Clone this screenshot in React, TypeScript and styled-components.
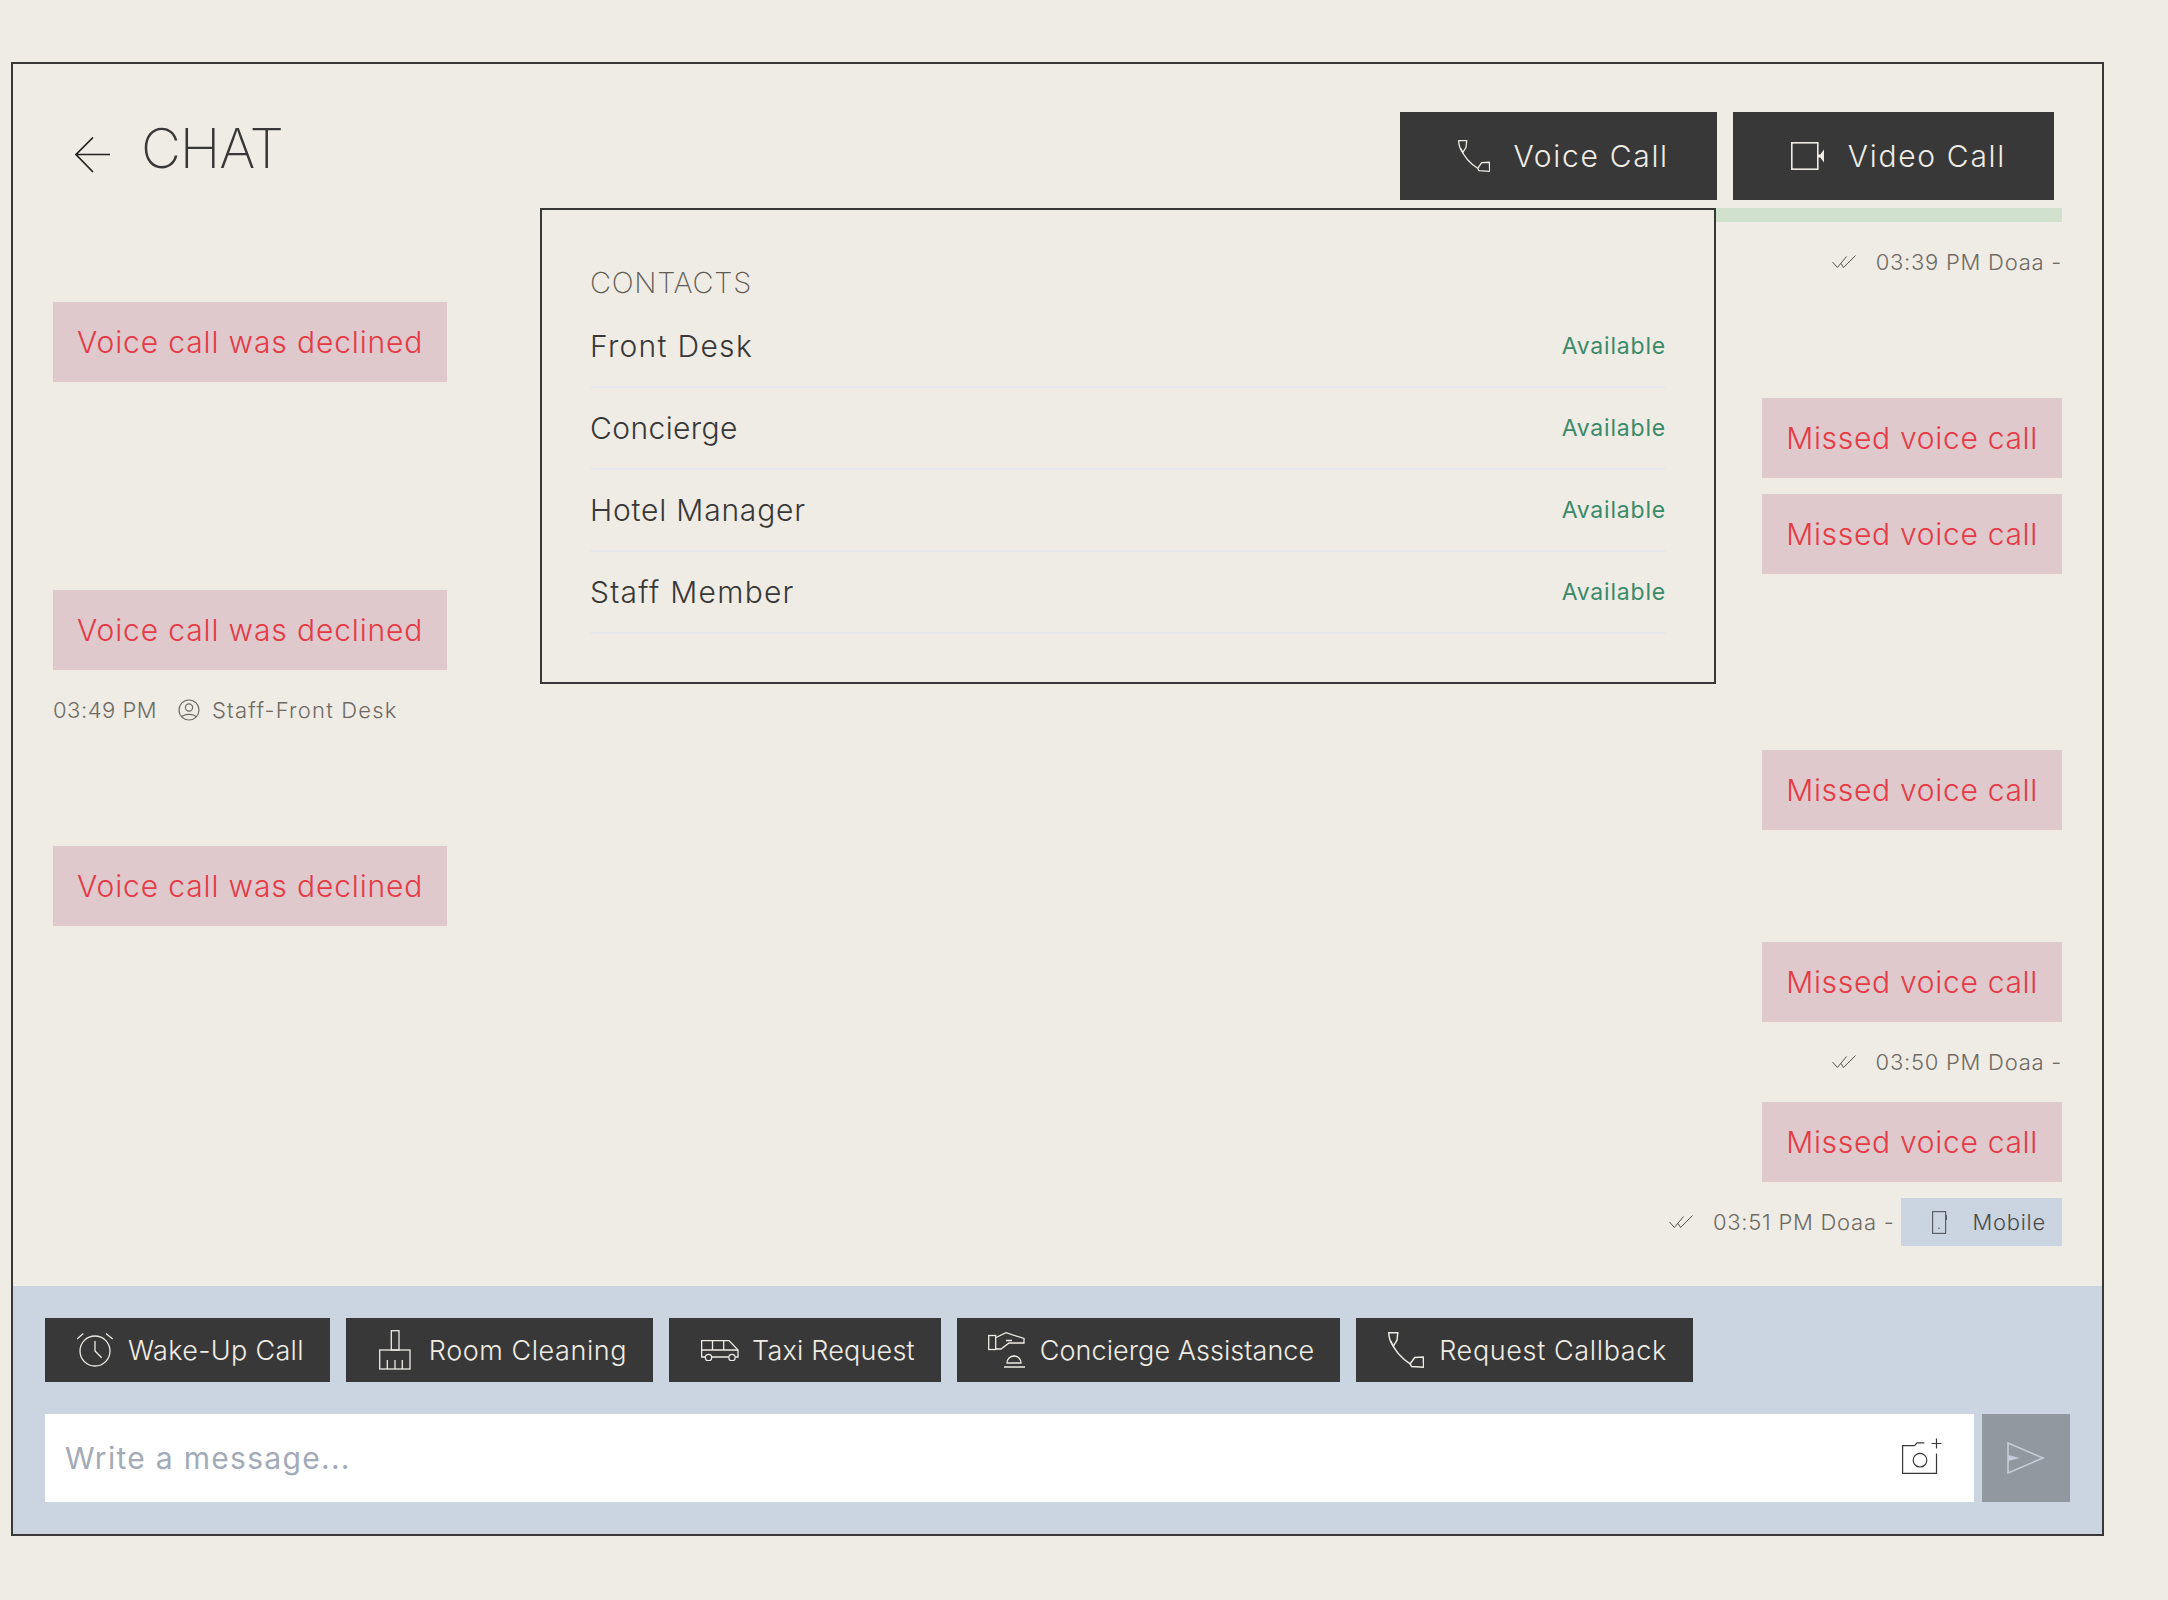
import React from "react";
import styled, { createGlobalStyle } from "styled-components";

const font = `Inter, "Noto Sans", sans-serif`;
const dark = "#383838";
const cream = "#efece5";
const slate = "#cbd5e1";

const GlobalStyle = createGlobalStyle`
  html, body {
    margin: 0;
    padding: 0;
    background: ${cream};
  }
  * {
    box-sizing: border-box;
  }
`;

const Page = styled.div`
  min-height: 100vh;
  padding: 62px 64px 64px 11px;
  font-family: ${font};
  background: ${cream};
`;

const Panel = styled.main`
  position: relative;
  width: 2093px;
  height: 1474px;
  border: 2px solid ${dark};
  display: flex;
  flex-direction: column;
`;

const Header = styled.header`
  flex: none;
  height: 144px;
  padding: 48px 48px 8px 62px;
  display: flex;
  justify-content: space-between;
  align-items: flex-start;
`;

const TitleGroup = styled.div`
  height: 72px;
  display: flex;
  align-items: center;
  gap: 30px;
`;

const BackIcon = styled.svg`
  width: 36px;
  height: 36px;
  margin-top: 14px;
  fill: none;
  stroke: #222;
  stroke-width: 1.7;
`;

const Title = styled.h1`
  margin: 0;
  font-size: 55px;
  font-weight: 200;
  letter-spacing: -1.1px;
  color: ${dark};
`;

const CallButtons = styled.div`
  display: flex;
  gap: 16px;
`;

const CallButton = styled.button<{ $gap: number }>`
  height: 88px;
  padding: 0 48px 0 58px;
  border: 0;
  background: ${dark};
  color: ${cream};
  font-family: ${font};
  font-size: 30px;
  font-weight: 300;
  letter-spacing: 1.7px;
  display: flex;
  align-items: center;
  gap: ${({ $gap }) => $gap}px;
`;

const Messages = styled.section`
  flex: 1;
  min-height: 0;
  overflow: hidden;
  padding: 0 40px 40px;
  display: flex;
  flex-direction: column;
  justify-content: flex-end;
  gap: 16px;
`;

const Bubble = styled.div<{ $out?: boolean; $green?: boolean }>`
  flex: none;
  height: 80px;
  padding: 0 24px;
  display: flex;
  align-items: center;
  align-self: ${({ $out }) => ($out ? "flex-end" : "flex-start")};
  background: ${({ $green }) => ($green ? "#d0e2cd" : "#dfc9cd")};
  color: #e63946;
  font-size: 30px;
  font-weight: 300;
  letter-spacing: ${({ $out }) => ($out ? "0.7px" : "0.87px")};
  ${({ $green }) => $green && "width: 500px;"}
`;

const MetaRow = styled.div<{ $out?: boolean }>`
  flex: none;
  height: 48px;
  display: flex;
  align-items: center;
  align-self: ${({ $out }) => ($out ? "flex-end" : "flex-start")};
  color: #6e6a64;
  font-size: 22px;
  font-weight: 300;
  letter-spacing: 0.75px;
`;

const MetaTime = styled.span`
  letter-spacing: 0.5px;
`;

const MetaName = styled.span`
  letter-spacing: 1.19px;
`;

const CheckIcon = styled.svg`
  width: 24px;
  height: 14px;
  margin-right: 20px;
  fill: none;
  stroke: #55524d;
  stroke-width: 1;
`;

const PersonIcon = styled.svg`
  width: 22px;
  height: 22px;
  margin: 0 12px 0 21px;
  fill: none;
  stroke: #6e6a64;
  stroke-width: 1.2;
`;

const DeviceChip = styled.div`
  height: 48px;
  margin-left: 7px;
  padding: 0 16px 0 31px;
  display: flex;
  align-items: center;
  gap: 25px;
  background: ${slate};
  color: #4a4a4a;
`;

const MobileIcon = styled.svg`
  width: 15px;
  height: 23px;
  fill: none;
  stroke: #5a5f66;
  stroke-width: 1.2;
`;

const Contacts = styled.aside`
  position: absolute;
  left: 527px;
  top: 144px;
  width: 1176px;
  height: 476px;
  padding: 48px;
  border: 2px solid ${dark};
  background: ${cream};
`;

const ContactsTitle = styled.div`
  height: 48px;
  display: flex;
  align-items: center;
  color: #5f5c56;
  font-size: 29px;
  font-weight: 200;
  letter-spacing: 0.7px;
`;

const ContactRow = styled.div`
  height: 82px;
  border-bottom: 2px solid #e7e8ee;
  display: flex;
  justify-content: space-between;
  align-items: center;
`;

const ContactName = styled.span<{ $track: number }>`
  color: ${dark};
  font-size: 30px;
  font-weight: 300;
  letter-spacing: ${({ $track }) => $track}px;
`;

const ContactStatus = styled.span`
  color: #3b8a68;
  font-size: 23px;
  font-weight: 400;
  letter-spacing: 0.8px;
`;

const Footer = styled.footer`
  flex: none;
  height: 248px;
  padding: 32px;
  background: ${slate};
  display: flex;
  flex-direction: column;
  gap: 32px;
`;

const Actions = styled.div`
  display: flex;
  gap: 16px;
`;

const ActionButton = styled.button<{ $gap?: number; $track?: number; $left?: number }>`
  height: 64px;
  padding: 0 26px 0 ${({ $left = 32 }) => $left}px;
  border: 0;
  background: ${dark};
  color: ${cream};
  font-family: ${font};
  font-size: 27px;
  font-weight: 300;
  letter-spacing: ${({ $track = 0.33 }) => $track}px;
  display: flex;
  align-items: center;
  gap: ${({ $gap = 15 }) => $gap}px;
`;

const Composer = styled.div`
  height: 88px;
  display: flex;
  gap: 8px;
`;

const InputWrap = styled.div`
  flex: 1;
  background: #fff;
  padding: 0 32px 0 20px;
  display: flex;
  align-items: center;
  justify-content: space-between;
`;

const Placeholder = styled.span`
  color: #a3aab8;
  font-size: 30px;
  font-weight: 400;
  letter-spacing: 1.3px;
`;

const CameraIcon = styled.svg`
  width: 40px;
  height: 36px;
  margin-bottom: 4px;
  fill: none;
  stroke: ${dark};
  stroke-width: 1.2;
`;

const SendButton = styled.button`
  width: 88px;
  height: 88px;
  border: 0;
  padding: 0;
  background: #9198a0;
  display: flex;
  align-items: center;
  justify-content: center;
`;

const SendIcon = styled.svg`
  width: 38px;
  height: 32px;
  fill: none;
  stroke: #c5ccd9;
  stroke-width: 1.6;
`;

const LineSvg = styled.svg`
  flex: none;
  fill: none;
  stroke: ${cream};
  stroke-width: 1.3;
`;

function PhoneIcon({ size }: { size: number }) {
  return (
    <LineSvg width={size} height={size} viewBox="0 0 32 32">
      <path d="M0.7 0.7H8.7L8 7.3L4.7 12.7C2 9 0.7 4 0.7 0.7Z" />
      <path d="M2.5 8C6 17 13 24 19.7 28.3" />
      <path d="M19.7 28.3L23.7 22.7L31.3 22.3L31.7 31.3L21 30.7Z" />
    </LineSvg>
  );
}

function VideoIcon() {
  return (
    <LineSvg width={33} height={28} viewBox="0 0 33 28">
      <rect x="0.8" y="0.8" width="26" height="26.4" strokeWidth="1.6" />
      <path d="M27 12.5H29V15.5H27Z" fill={cream} stroke="none" />
      <path d="M28 14L33 7.5V20.5Z" fill={cream} stroke="none" />
    </LineSvg>
  );
}

function AlarmIcon() {
  return (
    <LineSvg width={36} height={36} viewBox="0 0 36 36">
      <circle cx="18" cy="19" r="15" />
      <path d="M18 9V19L24.7 25.7" />
      <path d="M0 7L6.3 1.5M29 1.5L35.7 7" />
    </LineSvg>
  );
}

function BroomIcon() {
  return (
    <LineSvg width={32} height={40} viewBox="0 0 32 40">
      <rect x="12.3" y="0.7" width="7.7" height="19.3" />
      <rect x="0.7" y="20" width="30.3" height="19" />
      <path d="M8.3 30V39M16 30V39M23.3 30V39" />
    </LineSvg>
  );
}

function VanIcon() {
  return (
    <LineSvg width={38} height={21} viewBox="0 0 38 21">
      <path d="M4 17H0.6V0.6H28L37 10V17H34.5M27.6 17H11" />
      <path d="M11.5 0.6V10M22.7 0.6V10M0.6 10H37" />
      <circle cx="7.5" cy="17.5" r="3.2" />
      <circle cx="31" cy="17.5" r="3.2" />
    </LineSvg>
  );
}

function ConciergeIcon() {
  return (
    <LineSvg width={40} height={36} viewBox="0 0 40 36">
      <rect x="0.7" y="3.5" width="7" height="14" />
      <path d="M8 5.5L18 0.7L36 6.5V11H21L13 17H8M18 8.5H24" />
      <path d="M19 31a7 7 0 0 1 14 0Z" />
      <path d="M26 23.5V25M16 35H37" />
    </LineSvg>
  );
}

function DoubleCheck() {
  return (
    <CheckIcon viewBox="0 0 24 14">
      <path d="M0.5 7L5.4 12.5L14.5 1.5M9 8.5L11.6 12.5L23.5 0.5" />
    </CheckIcon>
  );
}

function MetaOut({ time }: { time: string }) {
  return (
    <>
      <DoubleCheck />
      <span>{time} Doaa -</span>
    </>
  );
}

const contacts = [
  { name: "Front Desk", track: 1.3 },
  { name: "Concierge", track: 0.4 },
  { name: "Hotel Manager", track: 0.8 },
  { name: "Staff Member", track: 1.25 },
];

export default function App() {
  return (
    <>
      <GlobalStyle />
      <Page>
        <Panel>
          <Header>
            <TitleGroup>
              <BackIcon viewBox="0 0 36 36">
                <path d="M35 17.5H1M18 0.5L1 17.5L18 35" />
              </BackIcon>
              <Title>CHAT</Title>
            </TitleGroup>
            <CallButtons>
              <CallButton $gap={23}>
                <PhoneIcon size={32} />
                Voice Call
              </CallButton>
              <CallButton $gap={24}>
                <VideoIcon />
                Video Call
              </CallButton>
            </CallButtons>
          </Header>

          <Messages>
            <Bubble $out $green />
            <MetaRow $out>
              <MetaOut time="03:39 PM" />
            </MetaRow>
            <Bubble>Voice call was declined</Bubble>
            <Bubble $out>Missed voice call</Bubble>
            <Bubble $out>Missed voice call</Bubble>
            <Bubble>Voice call was declined</Bubble>
            <MetaRow>
              <MetaTime>03:49 PM</MetaTime>
              <PersonIcon viewBox="0 0 22 22">
                <circle cx="11" cy="11" r="10" />
                <circle cx="11" cy="8.5" r="3.6" />
                <path d="M4 18C6 14.5 16 14.5 18 18" />
              </PersonIcon>
              <MetaName>Staff-Front Desk</MetaName>
            </MetaRow>
            <Bubble $out>Missed voice call</Bubble>
            <Bubble>Voice call was declined</Bubble>
            <Bubble $out>Missed voice call</Bubble>
            <MetaRow $out>
              <MetaOut time="03:50 PM" />
            </MetaRow>
            <Bubble $out>Missed voice call</Bubble>
            <MetaRow $out>
              <MetaOut time="03:51 PM" />
              <DeviceChip>
                <MobileIcon viewBox="0 0 15 23">
                  <rect x="0.6" y="0.6" width="13" height="21.8" />
                  <path d="M7 16.5V18M14.4 4V9" />
                </MobileIcon>
                Mobile
              </DeviceChip>
            </MetaRow>
          </Messages>

          <Contacts>
            <ContactsTitle>CONTACTS</ContactsTitle>
            {contacts.map(({ name, track }) => (
              <ContactRow key={name}>
                <ContactName $track={track}>{name}</ContactName>
                <ContactStatus>Available</ContactStatus>
              </ContactRow>
            ))}
          </Contacts>

          <Footer>
            <Actions>
              <ActionButton>
                <AlarmIcon />
                Wake-Up Call
              </ActionButton>
              <ActionButton $left={33} $gap={18} $track={0.55}>
                <BroomIcon />
                Room Cleaning
              </ActionButton>
              <ActionButton $gap={13} $track={0.2}>
                <VanIcon />
                Taxi Request
              </ActionButton>
              <ActionButton $left={31} $gap={12} $track={0.05}>
                <ConciergeIcon />
                Concierge Assistance
              </ActionButton>
              <ActionButton $track={0.63}>
                <PhoneIcon size={36} />
                Request Callback
              </ActionButton>
            </Actions>
            <Composer>
              <InputWrap>
                <Placeholder>Write a message...</Placeholder>
                <CameraIcon viewBox="0 0 40 36">
                  <path d="M12.5 7.6H0.6V35.3H34.5V15.5M12.5 7.6L15 4.8H22.3" />
                  <circle cx="18" cy="22.2" r="6.8" />
                  <path d="M34.5 0.5V10.5M29.5 5.5H39.5" />
                </CameraIcon>
              </InputWrap>
              <SendButton aria-label="Send">
                <SendIcon viewBox="0 0 38 32">
                  <path d="M1 1L36 16L1 31Z" />
                  <path d="M1 13L13 16L1 19Z" fill="#c5ccd9" stroke="none" />
                </SendIcon>
              </SendButton>
            </Composer>
          </Footer>
        </Panel>
      </Page>
    </>
  );
}
